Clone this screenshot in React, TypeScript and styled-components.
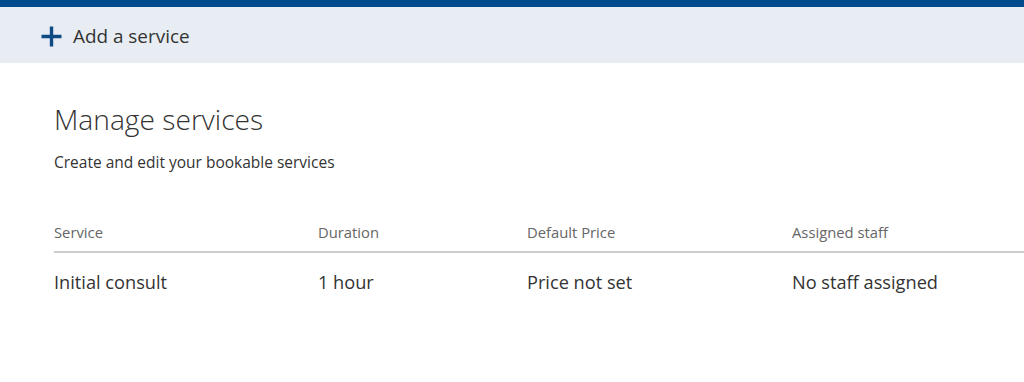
import styled, { createGlobalStyle } from 'styled-components';

const GlobalStyle = createGlobalStyle`
  body {
    margin: 0;
    background: #fff;
    font-family: "Open Sans", "Noto Sans", sans-serif;
    color: #333;
  }
`;

const TopStrip = styled.div`
  height: 7px;
  background: #004b8d;
`;

const Toolbar = styled.div`
  height: 56px;
  background: #e8edf4;
  display: flex;
  align-items: center;
  padding-left: 41px;
`;

const AddButton = styled.button`
  display: flex;
  align-items: center;
  gap: 11px;
  border: none;
  background: transparent;
  padding: 0;
  padding-top: 2px;
  font-family: inherit;
  font-size: 18.9px;
  color: #333;
  cursor: pointer;
`;

const Content = styled.main`
  padding: 38px 0 0 54px;
`;

const Title = styled.h1`
  margin: 0;
  font-size: 28.2px;
  font-weight: 300;
  color: #333;
  line-height: 36px;
`;

const Subtitle = styled.p`
  margin: 14px 0 0;
  font-size: 15.5px;
  color: #333;
`;

const Table = styled.div`
  margin-top: 40px;
`;

const Row = styled.div<{ $header?: boolean }>`
  display: grid;
  grid-template-columns: 264px 209px 265px 1fr;
  align-items: center;
  height: ${p => (p.$header ? '38px' : '58px')};
  font-size: ${p => (p.$header ? '14.8px' : '18.2px')};
  color: ${p => (p.$header ? '#666' : '#333')};
  border-bottom: ${p => (p.$header ? '2px solid #ccc' : 'none')};
  white-space: nowrap;
`;

const Plus = () => (
  <svg width="21" height="21" viewBox="0 0 21 21">
    <path d="M10.5 0.5v20M0.5 10.5h20" stroke="#0f4a85" strokeWidth="3.4" />
  </svg>
);

export default function App() {
  return (
    <>
      <GlobalStyle />
      <TopStrip />
      <Toolbar>
        <AddButton>
          <Plus />
          Add a service
        </AddButton>
      </Toolbar>
      <Content>
        <Title>Manage services</Title>
        <Subtitle>Create and edit your bookable services</Subtitle>
        <Table>
          <Row $header>
            <span>Service</span>
            <span>Duration</span>
            <span>Default Price</span>
            <span>Assigned staff</span>
          </Row>
          <Row>
            <span>Initial consult</span>
            <span>1 hour</span>
            <span>Price not set</span>
            <span>No staff assigned</span>
          </Row>
        </Table>
      </Content>
    </>
  );
}
